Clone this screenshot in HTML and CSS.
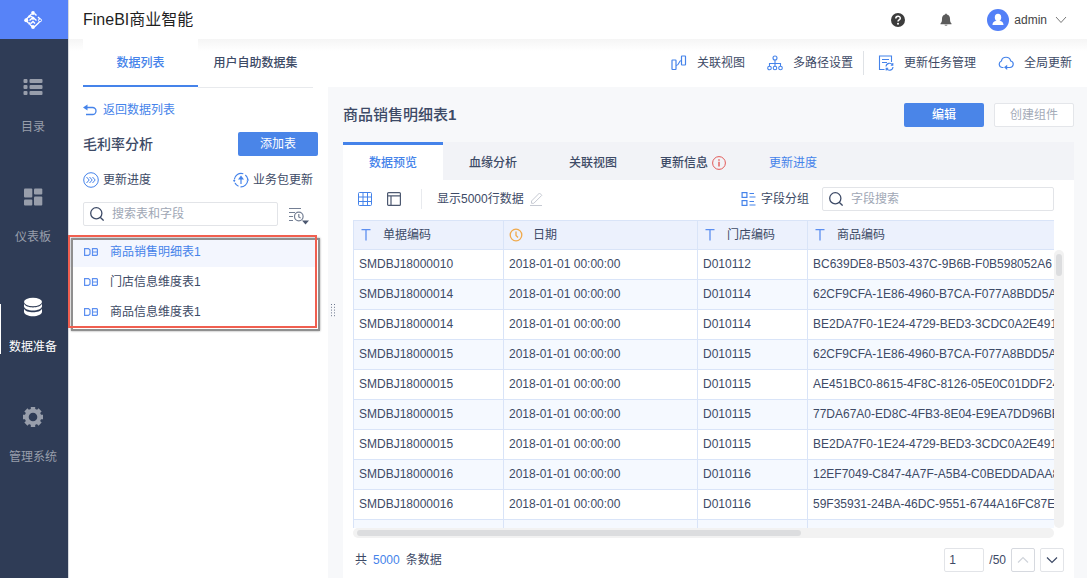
FILE: index.html
```html
<!DOCTYPE html>
<html lang="zh-CN">
<head>
<meta charset="utf-8">
<title>FineBI商业智能</title>
<link rel="stylesheet" href="styles.css">
</head>
<body>
<div class="app">
  <nav class="rail">
    <a class="brand" href="#" aria-label="FineBI">
      <svg width="20" height="20" viewBox="0 0 20 20" fill="none" stroke="#fff" stroke-width="1.400">
        <path d="M8.500 4 3 9.500M3 10.500 5.500 13M7 14.500 9.500 17M11.500 3.500 13.500 5.500M15 7l2 2M16.500 12 11 17.200"/>
        <path d="M6.500 10.500 10 7.500l3.500 3M10 7.500 7.500 6M8 13.500l2-2 2 2"/>
        <circle cx="17" cy="10.300" r="1.500" stroke-width="1"/>
        <g fill="#fff" stroke="none"><circle cx="10" cy="3" r="1.900"/><circle cx="10" cy="17" r="1.900"/><circle cx="3.200" cy="10.200" r="2"/><circle cx="6.500" cy="6.500" r="1.200"/><circle cx="10" cy="8.200" r="1.500"/><circle cx="6.500" cy="13.500" r="1.200"/></g>
      </svg>
    </a>
    <div class="rail-list">
      <a class="rail-item" href="#">
        <svg width="20" height="20" viewBox="0 0 20 20" fill="currentColor"><rect x=".5" y="2" width="4" height="4" rx="1"/><rect x="6.500" y="2" width="13" height="4" rx="1"/><rect x=".5" y="8" width="4" height="4" rx="1"/><rect x="6.500" y="8" width="13" height="4" rx="1"/><rect x=".5" y="14" width="4" height="4" rx="1"/><rect x="6.500" y="14" width="13" height="4" rx="1"/></svg>
        <span>目录</span>
      </a>
      <a class="rail-item" href="#">
        <svg width="20" height="20" viewBox="0 0 20 20" fill="currentColor"><rect x="1" y="1.500" width="8.300" height="9" rx="1"/><rect x="11" y="1.500" width="8.300" height="6" rx="1"/><rect x="1" y="12.500" width="8.300" height="6" rx="1"/><rect x="11" y="9.500" width="8.300" height="9" rx="1"/></svg>
        <span>仪表板</span>
      </a>
      <a class="rail-item rail-item-active" href="#">
        <svg width="20" height="20" viewBox="0 0 20 20" fill="currentColor"><ellipse cx="10" cy="5" rx="9" ry="4.200"/><path d="M1 6.800c1 2.400 4.800 3.600 9 3.600s8-1.200 9-3.600v2.700c-.5 2.400-4.300 4-9 4s-8.500-1.600-9-4z"/><path d="M1 11.800c1 2.400 4.800 3.500 9 3.500s8-1.100 9-3.500v3.200c-.5 2.600-4.300 4.200-9 4.200S1.500 17.600 1 15z"/></svg>
        <span>数据准备</span>
      </a>
      <a class="rail-item" href="#">
        <svg width="20" height="20" viewBox="0 0 20 20"><g fill="none" stroke="currentColor"><circle cx="10" cy="10" r="6.300" stroke-width="4"/><path d="M10 0v3M10 17v3M0 10h3M17 10h3M2.900 2.900 5 5M15 15l2.100 2.100M2.900 17.100 5 15M15 5l2.100-2.100" stroke-width="4.400"/></g></svg>
        <span>管理系统</span>
      </a>
    </div>
  </nav>

  <div class="workspace">
    <header class="topbar">
      <h1 class="product">FineBI商业智能</h1>
      <div class="account">
        <button class="icon-btn" aria-label="帮助"><svg width="14" height="14" viewBox="0 0 14 14"><circle cx="7" cy="7" r="7" fill="#3c3c3c"/><path d="M4.800 5.500C4.800 2.500 9.300 2.600 9.300 5.200 9.300 6.900 7 6.800 7 8.500" fill="none" stroke="#fff" stroke-width="1.500"/><circle cx="7" cy="10.700" r="1" fill="#fff"/></svg></button>
        <button class="icon-btn" aria-label="消息"><svg width="12" height="14" viewBox="0 0 12 14" fill="#5b5b5b"><path d="M5.200 1.600V.8h1.600v.8C9 2 10 3.800 10 5.800c0 3 .6 3.900 1.500 4.700v.7H.5v-.7C1.400 9.700 2 8.800 2 5.800c0-2 1-3.800 3.200-4.200z"/><path d="M4.500 11.800h3c-.3 1.200-2.700 1.200-3 0z"/></svg></button>
        <button class="user">
          <svg width="22" height="22" viewBox="0 0 22 22"><circle cx="11" cy="11" r="11" fill="#5380f7"/><ellipse cx="11" cy="8.500" rx="3.200" ry="3.700" fill="#fff"/><path d="M5.500 16c0-3 2-3.500 3.700-4.200h3.600c1.700.7 3.700 1.200 3.700 4.200z" fill="#fff"/></svg>
          <span>admin</span>
          <svg width="12" height="8" viewBox="0 0 12 8" fill="none" stroke="#777"><path d="M1 1l5 5.500L11 1"/></svg>
        </button>
      </div>
    </header>

    <div class="columns">
      <aside class="side">
        <div class="side-tabs">
          <button class="side-tab side-tab-active">数据列表</button>
          <button class="side-tab">用户自助数据集</button>
        </div>
        <a class="back" href="#">
          <svg width="14" height="12" viewBox="0 0 14 12"><path d="M3 3.500h6.500a3.500 3.500 0 0 1 0 7H3" fill="none" stroke="#4583ea" stroke-width="1.300"/><path d="M0 3.500 4.500 .5v6z" fill="#4583ea"/></svg>
          返回数据列表
        </a>
        <div class="package">
          <h2 class="package-name">毛利率分析</h2>
          <button class="btn btn-primary">添加表</button>
        </div>
        <div class="updates">
          <button class="tool tool-tight"><svg width="16" height="16" viewBox="0 0 16 16" fill="none" stroke="#4583ea"><circle cx="8" cy="8" r="7.300"/><path d="M3.500 5l2.700 3-2.700 3M6.500 5l2.700 3-2.700 3M9.500 5l2.700 3-2.700 3"/></svg>更新进度</button>
          <button class="tool tool-tight"><svg width="16" height="16" viewBox="0 0 16 16" fill="none" stroke="#4583ea" stroke-width="1.200"><path d="M1.300 7.500a6.800 6.800 0 0 1 9-5.800M14.700 7a6.800 6.800 0 0 0-2.400-4M2 11a6.800 6.800 0 0 0 3.500 3.300M14.700 8.500a6.800 6.800 0 0 1-7.200 6.300"/><path d="M8 12V6"/><path d="M8 3.500 5 7.500h6zM0 8h2.500L1.200 10.500zM13.500 8.500H16L14.800 6z" fill="#4583ea" stroke="none"/></svg>业务包更新</button>
        </div>
        <div class="find">
          <label class="search find-box">
            <svg width="14" height="14" viewBox="0 0 14 14" fill="none" stroke="#3d4a66" stroke-width="1.300"><circle cx="6.300" cy="6.300" r="5.600"/><path d="M10.200 10.200 13.600 13.600"/></svg>
            <input type="text" placeholder="搜索表和字段" aria-label="搜索表和字段">
          </label>
          <button class="icon-btn sort" aria-label="排序"><svg width="20" height="18" viewBox="0 0 20 18" fill="none" stroke="#747f94" stroke-width="1.200"><path d="M0 1.500h12M0 5.500h6M0 9.500h4M0 13.500h4"/><circle cx="9.800" cy="9.500" r="4.300"/><path d="M9.800 7v3l1.800 1"/><path d="M13 13.500h7l-3.500 4z" fill="#4c5870" stroke="none"/></svg></button>
        </div>
        <ul class="tables">
          <li><a class="table-link table-link-active" href="#"><svg class="db" viewBox="0 0 14 8"><path d="M.600.600H4.500L6 2v4L4.500 7.400H.600zM8.500.600h4.200l.7.700v5.400l-.7.700H8.500zM8.500 4h4.900"/></svg>商品销售明细表1</a></li>
          <li><a class="table-link" href="#"><svg class="db" viewBox="0 0 14 8"><path d="M.600.600H4.500L6 2v4L4.500 7.400H.600zM8.500.600h4.200l.7.700v5.400l-.7.700H8.500zM8.500 4h4.900"/></svg>门店信息维度表1</a></li>
          <li><a class="table-link" href="#"><svg class="db" viewBox="0 0 14 8"><path d="M.600.600H4.500L6 2v4L4.500 7.400H.600zM8.500.600h4.200l.7.700v5.400l-.7.700H8.500zM8.500 4h4.900"/></svg>商品信息维度表1</a></li>
        </ul>
      </aside>

      <main class="main">
        <div class="actions">
          <button class="tool"><svg width="16" height="16" viewBox="0 0 16 16" fill="none" stroke="#4583ea" stroke-width="1.200"><rect x="1" y="5" width="4" height="9.500" rx=".5"/><rect x="10.500" y="1" width="4" height="9" rx=".5"/><path d="M5 10.500c4 0 2-5 5.500-5"/></svg>关联视图</button>
          <button class="tool"><svg width="16" height="16" viewBox="0 0 16 16" fill="none" stroke="#4583ea" stroke-width="1.100"><circle cx="8" cy="3" r="2"/><circle cx="2.500" cy="13" r="1.800"/><circle cx="8" cy="13" r="1.800"/><circle cx="13.500" cy="13" r="1.800"/><path d="M8 5v6.200M2.500 11.200V8.500h11v2.700"/></svg>多路径设置</button>
          <span class="rule"></span>
          <button class="tool"><svg width="16" height="16" viewBox="0 0 16 16" fill="none" stroke="#4583ea" stroke-width="1.100"><path d="M6.500 14.500H1.500V1h12v6M4 4.500h7M4 7.500h5"/><path d="M8 11.500a3.500 3.500 0 0 1 6.500-1.500M15 12a3.500 3.500 0 0 1-6.500 1.500M14.800 8v2.200h-2M8.200 15.500v-2.200h2"/></svg>更新任务管理</button>
          <button class="tool"><svg width="16" height="16" viewBox="0 0 16 16" fill="none" stroke="#4583ea" stroke-width="1.200"><path d="M5.500 12.500H4A3.400 3.400 0 0 1 3.400 6C4.500 1 11.500 1 12.700 6a3.300 3.300 0 0 1-.7 6.500H8"/><path d="M6 12.300l3.200-2.600v5.200z" fill="#4583ea" stroke="none"/></svg>全局更新</button>
        </div>

        <div class="stage">
          <button class="grip" aria-label="调整宽度"><svg width="4" height="13" viewBox="0 0 4 13" stroke="#6b768c" stroke-dasharray="1 1.800"><path d="M.5 0v13M3.500 0v13"/></svg></button>
          <section class="detail">
            <div class="detail-head">
              <h2 class="detail-name">商品销售明细表<b>1</b></h2>
              <button class="btn btn-primary btn-strong">编辑</button>
              <button class="btn btn-plain">创建组件</button>
            </div>
            <div class="card">
              <div class="tabs">
                <button class="tab tab-active">数据预览</button>
                <button class="tab">血缘分析</button>
                <button class="tab">关联视图</button>
                <button class="tab">更新信息<svg width="14" height="14" viewBox="0 0 14 14" fill="none" stroke="#e25a58"><circle cx="7" cy="7" r="6.400"/><path d="M7 5.800v4.700M7 3.200v1.500" stroke-width="1.400"/></svg></button>
                <button class="tab tab-link">更新进度</button>
              </div>
              <div class="toolbar">
                <button class="icon-btn" aria-label="表格视图"><svg width="14" height="14" viewBox="0 0 14 14" fill="none" stroke="#4583ea"><rect x=".5" y=".5" width="13" height="13" rx="1"/><path d="M5 .5v13M9.500 .5v13M.5 5h13M.5 9.500h13"/></svg></button>
                <button class="icon-btn" aria-label="字段视图"><svg width="14" height="14" viewBox="0 0 14 14" fill="none" stroke="#4c5870" stroke-width="1.200"><rect x=".6" y=".6" width="12.800" height="12.800" rx="1"/><path d="M.6 3.800h12.800M4 3.800v9.600"/></svg></button>
                <span class="rule rule-short"></span>
                <span class="rows-note">显示5000行数据<button class="icon-btn" aria-label="编辑行数"><svg width="14" height="14" viewBox="0 0 14 14" fill="none" stroke="#c6cad3"><path d="M1.500 9 9.500 1l2.300 2.300-8 8H1.500zM0 13.500h12"/></svg></button></span>
                <button class="tool tool-tight group"><svg width="16" height="14" viewBox="0 0 16 14" fill="none" stroke="#4583ea" stroke-width="1.200"><rect x="1.100" y=".6" width="4.800" height="4.800"/><rect x="1.100" y="8.600" width="4.800" height="4.800"/><path d="M8.500 1.500H13M8.500 5h6M8.500 9.500H13M8.500 13h6"/></svg>字段分组</button>
                <label class="search field-box">
                  <svg width="14" height="14" viewBox="0 0 14 14" fill="none" stroke="#3d4a66" stroke-width="1.300"><circle cx="6.300" cy="6.300" r="5.600"/><path d="M10.200 10.200 13.600 13.600"/></svg>
                  <input type="text" placeholder="字段搜索" aria-label="字段搜索">
                </label>
              </div>
              <div class="grid">
                <div class="grid-view">
                  <table class="data">
                    <colgroup><col class="c-bill"><col class="c-date"><col class="c-store"><col class="c-goods"></colgroup>
                    <thead>
                      <tr>
                        <th><span class="field"><svg class="type" viewBox="0 0 14 14"><path d="M2.500 1.700h9M7 1.700v10.800"/></svg>单据编码</span></th>
                        <th><span class="field"><svg class="type type-date" viewBox="0 0 14 14"><circle cx="7" cy="7" r="5.800"/><path d="M7 3.500v4l2 2"/></svg>日期</span></th>
                        <th><span class="field"><svg class="type" viewBox="0 0 14 14"><path d="M2.500 1.700h9M7 1.700v10.800"/></svg>门店编码</span></th>
                        <th><span class="field"><svg class="type" viewBox="0 0 14 14"><path d="M2.500 1.700h9M7 1.700v10.800"/></svg>商品编码</span></th>
                      </tr>
                    </thead>
                    <tbody>
                      <tr><td>SMDBJ18000010</td><td>2018-01-01 00:00:00</td><td>D010112</td><td>BC639DE8-B503-437C-9B6B-F0B598052A6</td></tr>
                      <tr><td>SMDBJ18000014</td><td>2018-01-01 00:00:00</td><td>D010114</td><td>62CF9CFA-1E86-4960-B7CA-F077A8BDD5A</td></tr>
                      <tr><td>SMDBJ18000014</td><td>2018-01-01 00:00:00</td><td>D010114</td><td>BE2DA7F0-1E24-4729-BED3-3CDC0A2E491</td></tr>
                      <tr><td>SMDBJ18000015</td><td>2018-01-01 00:00:00</td><td>D010115</td><td>62CF9CFA-1E86-4960-B7CA-F077A8BDD5A</td></tr>
                      <tr><td>SMDBJ18000015</td><td>2018-01-01 00:00:00</td><td>D010115</td><td>AE451BC0-8615-4F8C-8126-05E0C01DDF24</td></tr>
                      <tr><td>SMDBJ18000015</td><td>2018-01-01 00:00:00</td><td>D010115</td><td>77DA67A0-ED8C-4FB3-8E04-E9EA7DD96BE</td></tr>
                      <tr><td>SMDBJ18000015</td><td>2018-01-01 00:00:00</td><td>D010115</td><td>BE2DA7F0-1E24-4729-BED3-3CDC0A2E491</td></tr>
                      <tr><td>SMDBJ18000016</td><td>2018-01-01 00:00:00</td><td>D010116</td><td>12EF7049-C847-4A7F-A5B4-C0BEDDADAA8</td></tr>
                      <tr><td>SMDBJ18000016</td><td>2018-01-01 00:00:00</td><td>D010116</td><td>59F35931-24BA-46DC-9551-6744A16FC87E</td></tr>
                      <tr><td></td><td></td><td></td><td></td></tr>
                    </tbody>
                  </table>
                </div>
                <div class="vbar"><div class="vthumb"></div></div>
                <div class="hbar"><div class="hthumb"></div></div>
              </div>
              <footer class="pager">
                <span class="total">共<b>5000</b>条数据</span>
                <input class="page" type="text" value="1" aria-label="页码">
                <span class="pages">/50</span>
                <button class="step step-off" aria-label="上一页"><svg width="12" height="8" viewBox="0 0 12 8"><path d="M1 6.500 6 1.500l5 5"/></svg></button>
                <button class="step" aria-label="下一页"><svg width="12" height="8" viewBox="0 0 12 8"><path d="M1 1.500l5 5 5-5"/></svg></button>
              </footer>
            </div>
          </section>
        </div>
      </main>
    </div>
  </div>
</div>
</body>
</html>
```

FILE: styles.css
```css
* { box-sizing: border-box; }

body {
  margin: 0;
  font: 12px/16px "Liberation Sans", "Noto Sans CJK SC", sans-serif;
  color: #3d4a66;
  background: #fff;
}

button, input { font: inherit; color: inherit; }
button { padding: 0; border: 0; background: none; cursor: pointer; white-space: nowrap; }
a { color: inherit; text-decoration: none; }
h1, h2, ul { margin: 0; padding: 0; }
ul { list-style: none; }
svg { display: block; flex: none; }

.app { display: flex; height: 100vh; overflow: hidden; }

/* Navigation rail */
.rail { flex: none; width: 68px; background: #2f3c56; color: #989eab; }
.brand { display: flex; align-items: center; justify-content: center; height: 39px; padding-right: 2px; background: #5783f8; }
.rail-list { display: flex; flex-direction: column; gap: 52px; padding-top: 38px; }
.rail-item { position: relative; display: flex; flex-direction: column; align-items: center; gap: 22px; padding-right: 2px; }
.rail-item-active { color: #fff; }
.rail-item-active::before { content: ""; position: absolute; left: 0; top: 7px; width: 1px; height: 50px; background: #fff; }

/* Top bar */
.workspace { flex: 1; min-width: 0; display: flex; flex-direction: column; border-left: 1px solid #d6d9de; }
.topbar { flex: none; display: flex; align-items: center; justify-content: space-between; height: 39px; padding: 0 20px 0 14px; }
.product { font-size: 16px; line-height: 24px; font-weight: 400; color: #1f1f1f; }
.account { display: flex; align-items: center; gap: 35px; }
.icon-btn { display: flex; align-items: center; }
.user { display: flex; align-items: center; gap: 5px; color: #444; }
.user svg:last-child { margin-left: 3px; }

.columns { flex: 1; min-height: 0; display: flex; background: linear-gradient(#f5f5f5, #fff 12px); }

/* Left panel */
.side { flex: none; width: 259px; }
.side-tabs { display: flex; height: 49px; margin: 0 15px 0 14px; }
.side-tab { flex: 1; border-bottom: 1px solid #e8eaed; font-weight: 500; }
.side-tab-active { height: 48px; padding-top: 2px; background: #fff; border-bottom: 2px solid #4583ea; color: #4583ea; }
.back { display: flex; align-items: center; gap: 6px; margin: 14px 14px 0; color: #4583ea; }
.package { display: flex; align-items: center; justify-content: space-between; margin: 14px 10px 0 14px; }
.package-name { font-size: 14px; line-height: 20px; font-weight: 500; }
.btn { width: 80px; height: 24px; border-radius: 2px; }
.btn-primary { background: #4a85e8; color: #fff; }
.btn-strong { font-weight: 500; }
.btn-plain { background: #fff; border: 1px solid #e4e6ea; color: #a4abb8; }
.updates { display: flex; justify-content: space-between; margin: 16px 15px 0 14px; }
.tool { display: flex; align-items: center; gap: 10px; }
.tool-tight { gap: 4px; }
.find { display: flex; align-items: center; gap: 11px; margin: 14px 19px 0 14px; }
.search { display: flex; align-items: center; gap: 8px; height: 24px; padding: 0 6px; background: #fff; border: 1px solid #e2e4e8; border-radius: 2px; }
.search input { flex: 1; min-width: 0; padding: 0; border: 0; outline: 0; background: none; }
.search input::placeholder { color: #a0a7b5; opacity: 1; }
.find-box { flex: 1; min-width: 0; }
.sort { padding-top: 4px; }

/* Highlighted table list */
.tables { position: relative; margin-top: 11px; }
.tables::before, .tables::after { content: ""; position: absolute; pointer-events: none; }
.tables::before { inset: 1px 8px -4px 2px; border: 2px solid #8f8f8f; box-shadow: 0 0 2px #999; }
.tables::after { inset: -2px 11px -1px -1px; border: 2px solid #f05f50; }
.table-link { display: flex; align-items: center; gap: 12px; height: 30px; padding-left: 15px; }
.table-link-active { background: #f3f6fe; color: #4583ea; }
.tables li { margin-right: 12px; }
.db { width: 14px; height: 8px; fill: none; stroke: #5c8ff0; stroke-width: 1.2; }

/* Right side */
.main { flex: 1; min-width: 0; display: flex; flex-direction: column; }
.actions { flex: none; display: flex; align-items: center; justify-content: flex-end; gap: 22px; height: 48px; padding-right: 15px; }
.rule { width: 1px; height: 24px; margin: 0 -8px 0 -12px; background: #dfe2e6; }
.stage { flex: 1; min-height: 0; display: flex; background: #f7f8fa; }
.grip { flex: none; width: 15px; padding: 0 0 44px 3px; }
.detail { flex: 1; min-width: 0; display: flex; flex-direction: column; margin-right: 13px; }
.detail-head { flex: none; display: flex; align-items: center; gap: 10px; padding: 16px 0 15px; }
.detail-name { flex: 1; font-size: 15px; line-height: 24px; font-weight: 500; }
.card { flex: 1; min-height: 0; display: flex; flex-direction: column; background: #fff; }
.tabs { flex: none; display: flex; height: 38px; background: #f2f3f7; }
.tab { display: flex; align-items: center; justify-content: center; gap: 4px; width: 100px; padding-top: 4px; font-weight: 500; }
.tab-active { padding-top: 1px; border-top: 3px solid #4583ea; background: #fff; color: #4583ea; }
.tab-link { color: #4583ea; font-weight: 400; }

.toolbar { flex: none; display: flex; align-items: center; gap: 15px; height: 40px; padding: 0 20px 2px 15px; }
.rule-short { height: 20px; margin: 0 0 0 5px; background: #e8eaee; }
.rows-note { display: flex; align-items: center; gap: 6px; }
.group { margin-left: auto; }
.field-box { flex: 0 1 232px; margin-left: -2px; }

.grid { flex: 1; min-height: 0; display: grid; grid-template: 1fr 10px / 1fr 10px; margin: 0 10px; }
.grid-view { overflow: auto; scrollbar-width: none; min-width: 0; min-height: 0; }
.data { width: 800px; table-layout: fixed; border-collapse: separate; border-spacing: 0; }
.c-bill { width: 150px; }
.c-date { width: 194px; }
.c-store { width: 110px; }
.data th, .data td { height: 30px; padding: 0 5px; border: 0 solid #d9e4f8; border-width: 0 0 1px 1px; text-align: left; font-weight: 400; white-space: nowrap; }
.data td { padding-bottom: 2px; }
.data th { border-top-width: 1px; background: #ecf1fd; }
.data tbody tr:nth-child(even) { background: #f5f9ff; }
.field { display: flex; align-items: center; gap: 10px; }
.type { width: 14px; height: 14px; fill: none; stroke: #5c8ff0; stroke-width: 1.3; }
.type-date { stroke: #f0a94b; }
.vbar { margin-top: 30px; padding: 4px 2px; border-radius: 5px; background: #f2f2f2; }
.vthumb { height: 22px; border-radius: 3px; background: #dcdddf; }
.hbar { padding: 2px 4px; border-radius: 5px; background: #f2f2f2; }
.hthumb { width: 64%; height: 6px; border-radius: 3px; background: #dcdddf; }

.pager { flex: none; display: flex; align-items: center; height: 40px; padding: 4px 10px 0 12px; }
.total { flex: 1; }
.total b { margin: 0 6px; font-weight: 400; color: #4583ea; }
.page { width: 40px; height: 24px; padding: 0 4px; border: 1px solid #e2e4e8; border-radius: 2px; }
.pages { margin: 0 5px; }
.step { display: flex; align-items: center; justify-content: center; width: 24px; height: 24px; margin-left: 5px; border: 1px solid #e2e4e8; border-radius: 2px; }
.step-off { margin-left: 0; border-color: #d6d9df; }
.step svg { fill: none; stroke: #3d4a66; stroke-width: 1.2; }
.step-off svg { stroke: #d0d4db; }
```
